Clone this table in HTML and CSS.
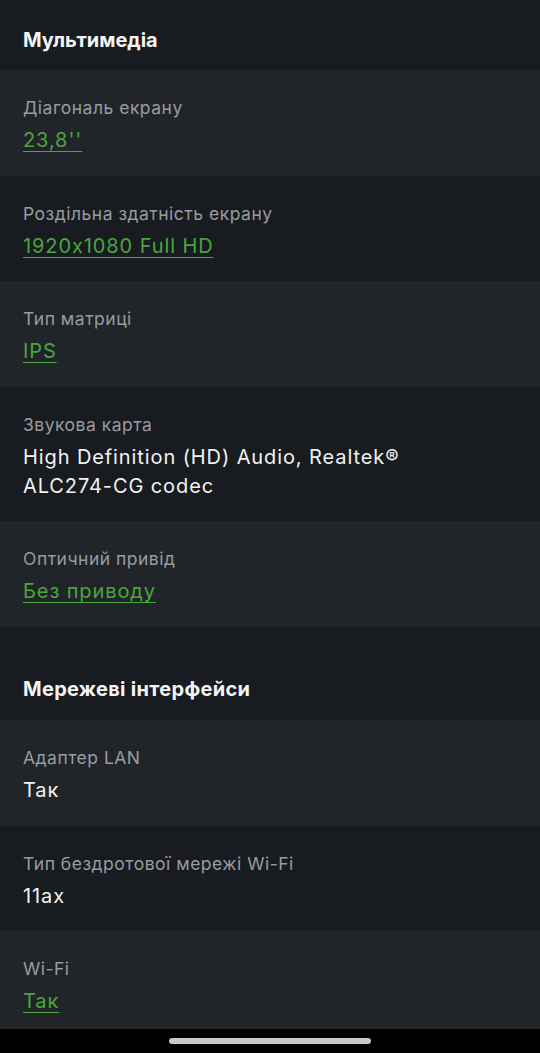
FILE: index.html
```html
<!DOCTYPE html>
<html lang="uk">
<head>
<meta charset="utf-8">
<link rel="stylesheet" href="styles.css">
</head>
<body>
<div class="page">
  <h2 class="section first">Мультимедіа</h2>
  <div class="row alt"><div class="label">Діагональ екрану</div><a class="value link" href="#">23,8''</a></div>
  <div class="row"><div class="label">Роздільна здатність екрану</div><a class="value link" href="#">1920x1080 Full HD</a></div>
  <div class="row alt"><div class="label">Тип матриці</div><a class="value link" href="#">IPS</a></div>
  <div class="row"><div class="label">Звукова карта</div><div class="value">High Definition (HD) Audio, Realtek® <span class="nowrap">ALC274-CG</span> codec</div></div>
  <div class="row alt"><div class="label">Оптичний привід</div><a class="value link" href="#">Без приводу</a></div>
  <h2 class="section">Мережеві інтерфейси</h2>
  <div class="row alt"><div class="label">Адаптер LAN</div><div class="value">Так</div></div>
  <div class="row"><div class="label">Тип бездротової мережі Wi-Fi</div><div class="value">11ax</div></div>
  <div class="row alt last"><div class="label">Wi-Fi</div><a class="value link" href="#">Так</a></div>
</div>
<div class="navbar"><div class="home"></div></div>
</body>
</html>
```
FILE: styles.css
```css
* { box-sizing: border-box; }
html, body { margin: 0; padding: 0; background: #181b1f; }
body {
  font-family: Inter, "Noto Sans", sans-serif;
  width: 540px;
  height: 1053px;
  overflow: hidden;
  display: flex;
  flex-direction: column;
}
.page { flex: 1; display: flex; flex-direction: column; }
.section {
  margin: 0;
  font-size: 20px;
  font-weight: 700;
  line-height: 28px;
  color: #f4f4f4;
  padding: 48px 23px 17px;
  letter-spacing: 0.3px;
}
.section.first { padding-top: 26px; padding-bottom: 16px; letter-spacing: 0; }
.row {
  padding: 26px 23px 20.6px;
  display: flex;
  flex-direction: column;
  align-items: flex-start;
  background: #181b1f;
}
.row.alt { background: #212529; }
.row.last { flex: 1; padding-bottom: 0; }
.label {
  font-size: 17.5px;
  line-height: 24px;
  color: #989ca1;
  letter-spacing: 0.5px;
}
.value {
  margin-top: 6px;
  font-size: 20px;
  line-height: 29px;
  color: #f2f2f2;
  letter-spacing: 0.9px;
}
.nowrap { white-space: nowrap; }
.link {
  color: #4aa53c;
  text-decoration: underline;
  text-decoration-thickness: 1px;
  text-underline-offset: 4px;
}
.navbar {
  height: 24px;
  background: #000;
  display: flex;
  justify-content: center;
  padding-top: 9px;
}
.home {
  width: 202px;
  height: 6px;
  border-radius: 3px;
  background: #c8c8c8;
}
```
